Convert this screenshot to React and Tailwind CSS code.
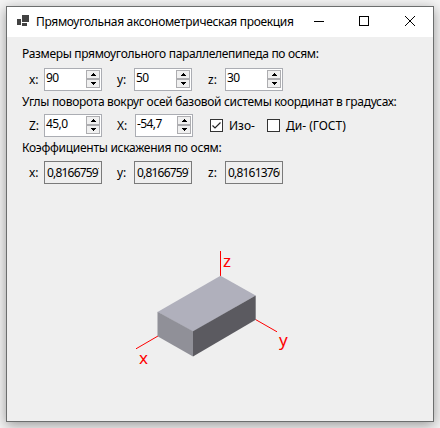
const coefClass =
  'flex h-[23px] w-[58px] shrink-0 items-center border border-[#7a7a7a] bg-[#efefef] px-[2px]';

function Arrow({ down }) {
  return (
    <div className="flex h-[9px] w-[14px] items-center justify-center border border-[#adadb0] bg-[#f0f0f0]">
      <svg width="5" height="3" viewBox="0 0 5 3" shapeRendering="crispEdges">
        {down ? <path d="M0 0h5v1h-1v1h-1v1h-1v-1h-1v-1h-1z" /> : <path d="M2 0h1v1h1v1h1v1h-5v-1h1v-1h1z" />}
      </svg>
    </div>
  );
}

function Spinner({ value }) {
  return (
    <div className="flex h-[23px] w-[58px] shrink-0 justify-between border border-[#abadb3] bg-white pt-px pr-px">
      <span className="pl-px leading-[15px] tracking-[-0.6px]">{value}</span>
      <div className="flex flex-col">
        <Arrow />
        <Arrow down />
      </div>
    </div>
  );
}

function Coef({ value }) {
  return (
    <div className={coefClass}>
      <span className="block w-[52px] overflow-hidden leading-[19px] tracking-[-0.8px] whitespace-nowrap">{value}</span>
    </div>
  );
}

function Check({ checked, label }) {
  return (
    <div className="flex items-center gap-[6px]">
      <div className="h-[13px] w-[13px] shrink-0 border border-[#333] bg-white">
        {checked && (
          <svg width="11" height="11" viewBox="0 0 11 11" fill="none" stroke="#222" strokeWidth="1.2">
            <path d="M1.5 5.5L4 8L9.5 2.5" />
          </svg>
        )}
      </div>
      <span className="leading-[17px]">{label}</span>
    </div>
  );
}

function Projection() {
  return (
    <svg className="block shrink-0" width="426" height="237" viewBox="7 184 426 237">
      <g stroke="#ff0000" strokeWidth="1">
        <path d="M220.5 251V276" shapeRendering="crispEdges" />
        <path d="M158 336L136 348.8" />
        <path d="M255.5 319.5L277 331.8" />
      </g>
      <path fill="#b0b0bc" d="M220.5 275.7L255.7 295.5L193 331.7L157.5 312Z" />
      <path fill="#909098" d="M157.5 311.7L193 331.3V356.5L157.5 336.3Z" />
      <path fill="#5b5a60" d="M193 331.3L255.7 295.5V319.7L193 356.5Z" />
      <g fill="#ff0000" fontSize="17">
        <text x="223" y="267">z</text>
        <text x="279" y="346">y</text>
        <text x="139" y="364">x</text>
      </g>
    </svg>
  );
}

export default function App() {
  return (
    <div className="h-[428px] w-[440px] overflow-hidden bg-[#f4f4f4] p-[6px] font-['Noto_Sans','Open_Sans',sans-serif] text-[12px] text-black">
      <div className="flex h-[416px] w-[428px] flex-col border border-[#6c6e6e] bg-[#efefef] shadow-[0_3px_12px_rgba(0,0,0,0.38)]">
        <header className="flex h-[30px] shrink-0 items-center bg-white">
          <svg className="mb-[2px] ml-[10px] shrink-0" width="13" height="12" viewBox="0 0 13 12" fill="#424242" shapeRendering="crispEdges">
            <path d="M0 4h4v6h-4zM5 0h7v7h-7zM5 8h5v3h-5z" />
          </svg>
          <span className="ml-[6px] w-[275px] shrink-0 tracking-[-0.31px] whitespace-nowrap">Прямоугольная аксонометрическая проекция</span>
          <svg className="mb-[2px] shrink-0" width="105" height="12" viewBox="0 0 105 12" fill="none" stroke="#000">
            <path d="M3 6.5h10M48.5 1.5h9v9h-9z" shapeRendering="crispEdges" />
            <path d="M94 1L104 11M104 1L94 11" />
          </svg>
        </header>
        <div className="flex h-[31px] shrink-0 items-center pl-[15px] pt-[3px] tracking-[-0.32px] whitespace-nowrap">
          Размеры прямоугольного параллелепипеда по осям:
        </div>
        <div className="flex shrink-0 items-center pl-[22px]">
          <span className="w-[15px]">x:</span>
          <Spinner value="90" />
          <span className="ml-[15px] w-[17px]">y:</span>
          <Spinner value="50" />
          <span className="ml-[16px] w-[17px]">z:</span>
          <Spinner value="30" />
        </div>
        <div className="flex h-[23px] shrink-0 items-center pb-[2px] pl-[15px] tracking-[-0.31px] whitespace-nowrap">
          Углы поворота вокруг осей базовой системы координат в градусах:
        </div>
        <div className="flex shrink-0 items-center pl-[22px]">
          <span className="w-[15px]">Z:</span>
          <Spinner value="45,0" />
          <span className="ml-[15px] w-[18px]">X:</span>
          <Spinner value="-54,7" />
          <div className="ml-[17px] flex w-[57px]">
            <Check checked label="Изо-" />
          </div>
          <Check label="Ди- (ГОСТ)" />
        </div>
        <div className="flex h-[24px] shrink-0 items-center pb-[2px] pl-[15px] tracking-[-0.28px] whitespace-nowrap">
          Коэффициенты искажения по осям:
        </div>
        <div className="flex shrink-0 items-center pl-[22px]">
          <span className="w-[15px]">x:</span>
          <Coef value="0,81667597" />
          <span className="ml-[15px] w-[17px]">y:</span>
          <Coef value="0,81667597" />
          <span className="ml-[16px] w-[17px]">z:</span>
          <Coef value="0,81613760" />
        </div>
        <Projection />
      </div>
    </div>
  );
}
